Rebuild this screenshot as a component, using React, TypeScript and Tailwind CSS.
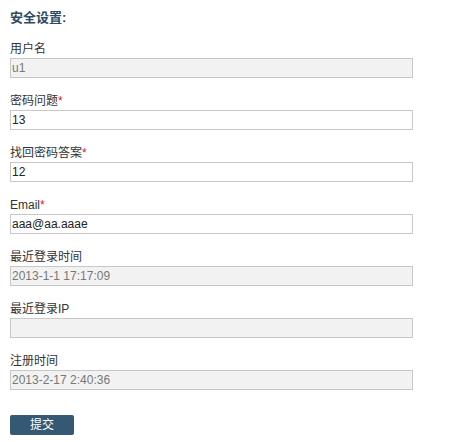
const font = { fontFamily: '"Liberation Sans", Arial, "Noto Sans CJK SC", sans-serif' };

type Field = { label: string; value: string; required?: boolean; readOnly?: boolean };

const fields: Field[] = [
  { label: '用户名', value: 'u1', readOnly: true },
  { label: '密码问题', value: '13', required: true },
  { label: '找回密码答案', value: '12', required: true },
  { label: 'Email', value: 'aaa@aa.aaae', required: true },
  { label: '最近登录时间', value: '2013-1-1 17:17:09', readOnly: true },
  { label: '最近登录IP', value: '', readOnly: true },
  { label: '注册时间', value: '2013-2-17 2:40:36', readOnly: true },
];

export default function App() {
  return (
    <div className="w-[472px] h-[442px] bg-white pl-[10px] pt-[10px]" style={font}>
      <h3 className="text-[13px] leading-[16px] font-bold text-[#2d4a63]">安全设置:</h3>
      <form className="flex flex-col">
        {fields.map((f) => (
          <div key={f.label} className="mt-[15px] flex flex-col">
            <label className="text-[12px] leading-[16px] text-[#333]">
              {f.label}
              {f.required && <span className="text-[#e02020]">*</span>}
            </label>
            <input
              readOnly={f.readOnly}
              defaultValue={f.value}
              className={`mt-[1px] w-[403px] h-[20px] border border-[#c8c8c8] px-[1px] text-[12px] outline-none ${
                f.readOnly ? 'bg-[#f2f2f2] text-[#777]' : 'bg-white text-[#222]'
              }`}
            />
          </div>
        ))}
        <div className="mt-[22px]">
          <button
            type="button"
            className="w-[64px] h-[20px] rounded-[2px] bg-[#355875] text-white text-[12px] leading-[20px]"
          >
            提交
          </button>
        </div>
      </form>
    </div>
  );
}
